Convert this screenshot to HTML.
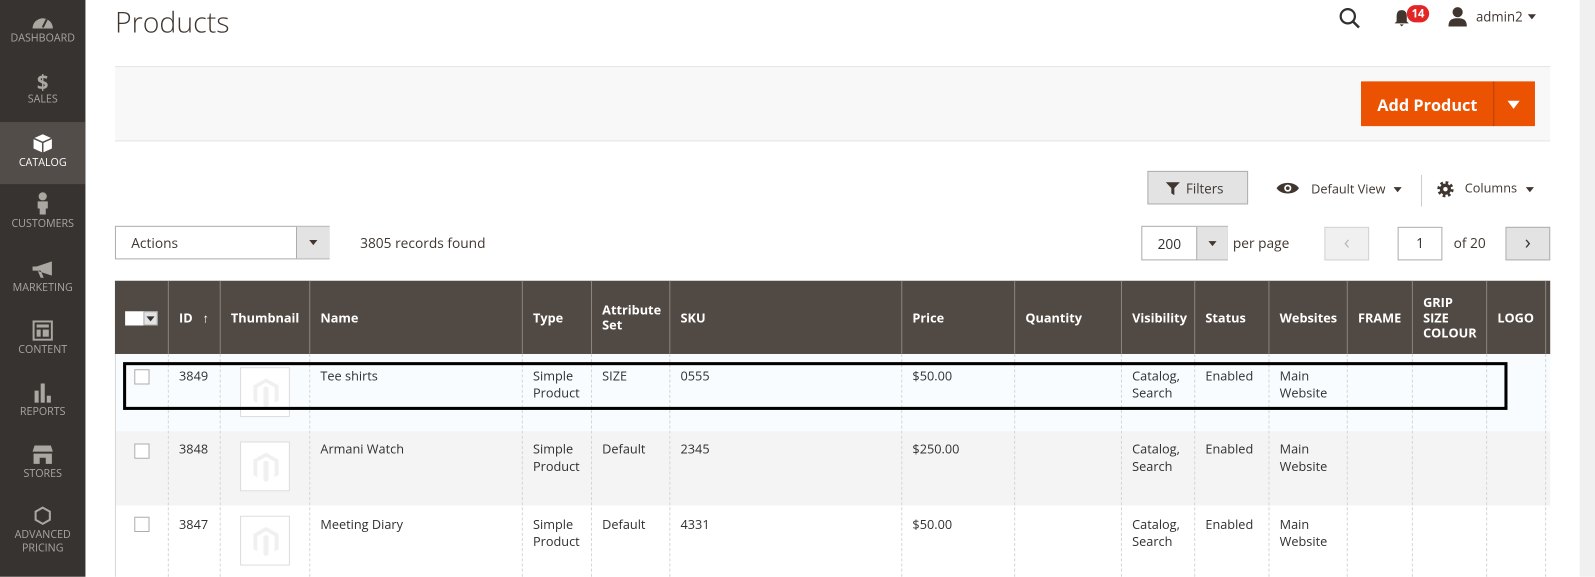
<!DOCTYPE html>
<html><head><meta charset="utf-8"><style>
*{margin:0;padding:0;box-sizing:border-box}
html,body{width:1595px;height:567px;overflow:hidden;background:#fff}
#w{position:absolute;left:0;top:0;width:1568px;height:558px;transform:scale(1.0172);transform-origin:0 0;font-family:"Open Sans","Liberation Sans",sans-serif;color:#303030;font-size:13px}
.a{position:absolute}
.sb{left:0;top:0;width:84px;height:567px;background:#373330}
.ni{position:absolute;left:0;width:84px;text-align:center;color:#aaa6a0;font-size:10.5px;line-height:13px}
.ni svg{display:block;margin:0 auto 3px}
.th{position:absolute;top:276px;height:72px;color:#fff;font-weight:bold;font-size:12.5px;display:flex;align-items:center;padding-left:10px;line-height:15px;border-left:1px solid #8a837f}
.vl{position:absolute;top:348px;height:219px;border-left:1px dashed #d6d6d6}
.c{position:absolute;font-size:12.5px;line-height:17px;color:#303030}
.cb{position:absolute;width:15px;height:15px;border:1px solid #adadad;background:#fff;left:132px}
.tn{position:absolute;left:236px;width:49px;height:49px;border:1px solid #ddd;background:#fff}
.tn svg{position:absolute;left:12px;top:10px}
</style></head><body><div id="w">
<div class="a sb"></div>
<div class="a" style="left:0;top:120px;width:84px;height:61px;background:#524d49"></div>
<div class="ni" style="top:13px"><svg width="22" height="16" viewBox="0 0 22 16"><path d="M1 15A10 10 0 0 1 21 15Z" fill="#aaa6a0"/><path d="M11 14L15 6" stroke="#373330" stroke-width="2"/></svg>DASHBOARD</div>
<div class="ni" style="top:70px"><div style="font-size:20px;font-weight:bold;line-height:22px;color:#aaa6a0">$</div>SALES</div>
<div class="ni" style="top:131px;color:#fff"><svg width="20" height="20" viewBox="0 0 20 20"><path d="M10 1L19 5V15L10 19L1 15V5Z" fill="#fff"/><path d="M1 5L10 9L19 5M10 9V19" stroke="#524d49" stroke-width="1.5" fill="none"/></svg>CATALOG</div>
<div class="ni" style="top:189px"><svg width="14" height="22" viewBox="0 0 14 22"><circle cx="7" cy="4" r="4" fill="#aaa6a0"/><path d="M2 9H12V16H10V22H4V16H2Z" fill="#aaa6a0"/></svg>CUSTOMERS</div>
<div class="ni" style="top:256px"><svg width="22" height="18" viewBox="0 0 22 18"><path d="M1 6H5L20 1V15L5 10H1Z M6 10L9 17H12L9 10" fill="#aaa6a0"/></svg>MARKETING</div>
<div class="ni" style="top:315px"><svg width="20" height="20" viewBox="0 0 20 20"><rect x="1" y="1" width="18" height="18" fill="none" stroke="#aaa6a0" stroke-width="2"/><rect x="4" y="4" width="12" height="3" fill="#aaa6a0"/><rect x="4" y="9" width="4" height="7" fill="#aaa6a0"/><rect x="10" y="9" width="6" height="7" fill="#aaa6a0"/></svg>CONTENT</div>
<div class="ni" style="top:376px"><svg width="20" height="20" viewBox="0 0 20 20"><rect x="2" y="8" width="4" height="12" fill="#aaa6a0"/><rect x="8" y="1" width="4" height="19" fill="#aaa6a0"/><rect x="14" y="13" width="4" height="7" fill="#aaa6a0"/></svg>REPORTS</div>
<div class="ni" style="top:437px"><svg width="22" height="20" viewBox="0 0 22 20"><path d="M3 1H19L21 7H1Z M2 9H20V19H14V13H8V19H2Z" fill="#aaa6a0"/></svg>STORES</div>
<div class="ni" style="top:497px"><svg width="20" height="20" viewBox="0 0 20 20"><path d="M10 2L17 6V14L10 18L3 14V6Z" fill="none" stroke="#aaa6a0" stroke-width="2"/></svg>ADVANCED<br>PRICING</div>

<div class="a" style="left:113px;top:3px;font-size:28px;font-weight:300;color:#41362f">Products</div>
<svg class="a" style="left:1316px;top:7px" width="22" height="22" viewBox="0 0 22 22"><circle cx="9" cy="9" r="7" fill="none" stroke="#303030" stroke-width="2.2"/><path d="M14 14L20 20" stroke="#303030" stroke-width="2.5"/></svg>
<svg class="a" style="left:1370px;top:9px" width="16" height="18" viewBox="0 0 16 18"><path d="M8 1C4 1 3 4 3 7V12L1 14H15L13 12V7C13 4 12 1 8 1Z M6 15H10L8 17Z" fill="#41362f"/></svg>
<div class="a" style="left:1383px;top:5px;width:22px;height:17px;border-radius:9px;background:#e22626;color:#fff;font-size:11px;font-weight:bold;text-align:center;line-height:17px">14</div>
<svg class="a" style="left:1423px;top:6px" width="20" height="20" viewBox="0 0 20 20"><circle cx="10" cy="6" r="5" fill="#41362f"/><path d="M1 20C1 13 5 12 10 12S19 13 19 20Z" fill="#41362f"/></svg>
<div class="a" style="left:1451px;top:7px;font-size:13px;color:#41362f">admin2</div>
<div class="a" style="left:1502px;top:14px;border-left:4px solid transparent;border-right:4px solid transparent;border-top:5px solid #41362f"></div>

<div class="a" style="left:113px;top:65px;width:1411px;height:74px;background:#f8f8f8;border-top:1px solid #e3e3e3;border-bottom:1px solid #e3e3e3"></div>
<div class="a" style="left:1338px;top:80px;width:171px;height:44px;background:#eb5202;color:#fff;font-weight:bold;font-size:16px"><span style="position:absolute;left:16px;top:12px">Add Product</span><div style="position:absolute;left:130px;top:0;height:44px;border-left:1px solid #b84002"></div><div style="position:absolute;left:144px;top:19px;border-left:6px solid transparent;border-right:6px solid transparent;border-top:8px solid #fff"></div></div>
<div class="a" style="left:1553px;top:0;width:20px;height:567px;background:#f0f0f0"></div>

<div class="a" style="left:1128px;top:168px;width:99px;height:33px;background:#e3e3e3;border:1px solid #adadad;font-size:13px;color:#41362f"><svg style="position:absolute;left:17px;top:10px" width="14" height="13" viewBox="0 0 14 13"><path d="M0 0H14L8.5 6V13L5.5 11V6Z" fill="#41362f"/></svg><span style="position:absolute;left:37px;top:7px">Filters</span></div>
<svg class="a" style="left:1254px;top:178px" width="24" height="14" viewBox="0 0 24 14"><path d="M1 7C5 0 19 0 23 7C19 14 5 14 1 7Z" fill="#41362f"/><circle cx="12" cy="7" r="3.5" fill="#fff"/><circle cx="12" cy="7" r="1.8" fill="#41362f"/></svg>
<div class="a" style="left:1289px;top:177px;font-size:12.5px;color:#41362f">Default View</div>
<div class="a" style="left:1370px;top:184px;border-left:4px solid transparent;border-right:4px solid transparent;border-top:5px solid #41362f"></div>
<div class="a" style="left:1397px;top:172px;height:31px;border-left:1px solid #ccc"></div>
<svg class="a" style="left:1412px;top:177px" width="18" height="18" viewBox="0 0 18 18"><circle cx="9" cy="9" r="6" fill="none" stroke="#41362f" stroke-width="4" stroke-dasharray="2.4 2.3"/><circle cx="9" cy="9" r="5.5" fill="#41362f"/><circle cx="9" cy="9" r="2.2" fill="#fff"/></svg>
<div class="a" style="left:1440px;top:176px;font-size:12.5px;color:#41362f">Columns</div>
<div class="a" style="left:1500px;top:184px;border-left:4px solid transparent;border-right:4px solid transparent;border-top:5px solid #41362f"></div>

<div class="a" style="left:113px;top:222px;width:211px;height:33px;border:1px solid #adadad;background:#fff"><span style="position:absolute;left:15px;top:7px;font-size:13.5px;color:#41362f">Actions</span><div style="position:absolute;left:177px;top:0;width:33px;height:31px;background:#e3e3e3;border-left:1px solid #adadad"><div style="position:absolute;left:12px;top:13px;border-left:4px solid transparent;border-right:4px solid transparent;border-top:5px solid #41362f"></div></div></div>
<div class="a" style="left:354px;top:230px;font-size:13.5px;color:#41362f">3805 records found</div>
<div class="a" style="left:1122px;top:222px;width:85px;height:34px;border:1px solid #adadad;background:#fff"><span style="position:absolute;left:15px;top:8px;font-size:13.5px">200</span><div style="position:absolute;left:53px;top:0;width:31px;height:32px;background:#e3e3e3;border-left:1px solid #adadad"><div style="position:absolute;left:11px;top:14px;border-left:4px solid transparent;border-right:4px solid transparent;border-top:5px solid #41362f"></div></div></div>
<div class="a" style="left:1212px;top:230px;font-size:13.5px;color:#41362f">per page</div>
<div class="a" style="left:1302px;top:223px;width:44px;height:33px;background:#f0f0f0;border:1px solid #d1d1d1;color:#bbb;font-size:20px;text-align:center;line-height:28px">‹</div>
<div class="a" style="left:1374px;top:223px;width:44px;height:33px;border:1px solid #adadad;text-align:center;line-height:31px;font-size:13.5px">1</div>
<div class="a" style="left:1429px;top:230px;font-size:13.5px;color:#41362f">of 20</div>
<div class="a" style="left:1480px;top:223px;width:44px;height:33px;background:#e3e3e3;border:1px solid #adadad;color:#41362f;font-size:20px;text-align:center;line-height:28px">›</div>

<div class="a" style="left:113px;top:276px;width:1411px;height:72px;background:#514943"></div>
<div class="a" style="left:123px;top:306px;width:19px;height:14px;background:#fff"></div>
<div class="a" style="left:141px;top:306px;width:14px;height:14px;background:#e3e3e3;border:1px solid #adadad"><div style="position:absolute;left:2px;top:4px;border-left:4px solid transparent;border-right:4px solid transparent;border-top:5px solid #303030"></div></div>
<div class="th" style="left:165px">ID&nbsp;&nbsp;&nbsp;↑</div>
<div class="th" style="left:216px">Thumbnail</div>
<div class="th" style="left:304px">Name</div>
<div class="th" style="left:513px">Type</div>
<div class="th" style="left:581px">Attribute<br>Set</div>
<div class="th" style="left:658px">SKU</div>
<div class="th" style="left:886px">Price</div>
<div class="th" style="left:997px">Quantity</div>
<div class="th" style="left:1102px">Visibility</div>
<div class="th" style="left:1174px">Status</div>
<div class="th" style="left:1247px">Websites</div>
<div class="th" style="left:1324px">FRAME</div>
<div class="th" style="left:1388px">GRIP<br>SIZE<br>COLOUR</div>
<div class="th" style="left:1461px">LOGO</div>
<div class="th" style="left:1519px;padding:0"></div>

<div class="a" style="left:113px;top:348px;width:1411px;height:76px;background:#f8fcfe"></div>
<div class="a" style="left:113px;top:424px;width:1411px;height:73px;background:#f4f4f4"></div>
<div class="a" style="left:113px;top:348px;height:219px;border-left:1px solid #d6d6d6"></div>
<div class="vl" style="left:165px"></div><div class="vl" style="left:216px"></div><div class="vl" style="left:304px"></div><div class="vl" style="left:513px"></div><div class="vl" style="left:581px"></div><div class="vl" style="left:658px"></div><div class="vl" style="left:886px"></div><div class="vl" style="left:997px"></div><div class="vl" style="left:1102px"></div><div class="vl" style="left:1174px"></div><div class="vl" style="left:1247px"></div><div class="vl" style="left:1324px"></div><div class="vl" style="left:1388px"></div><div class="vl" style="left:1461px"></div><div class="vl" style="left:1519px"></div>

<div class="cb" style="top:363px"></div><div class="cb" style="top:436px"></div><div class="cb" style="top:508px"></div>
<div class="tn" style="top:361px"><svg width="25" height="29" viewBox="0 0 25 29"><path d="M12.5 0L25 7V22L21 24V9L12.5 4L4 9V24L0 22V7Z M10 9L12.5 8L15 9V27L12.5 29L10 27Z" fill="#f0f0f0"/></svg></div>
<div class="tn" style="top:434px"><svg width="25" height="29" viewBox="0 0 25 29"><path d="M12.5 0L25 7V22L21 24V9L12.5 4L4 9V24L0 22V7Z M10 9L12.5 8L15 9V27L12.5 29L10 27Z" fill="#f0f0f0"/></svg></div>
<div class="tn" style="top:507px"><svg width="25" height="29" viewBox="0 0 25 29"><path d="M12.5 0L25 7V22L21 24V9L12.5 4L4 9V24L0 22V7Z M10 9L12.5 8L15 9V27L12.5 29L10 27Z" fill="#f0f0f0"/></svg></div>

<div class="c" style="left:176px;top:361px">3849</div>
<div class="c" style="left:315px;top:361px">Tee shirts</div>
<div class="c" style="left:524px;top:361px">Simple<br>Product</div>
<div class="c" style="left:592px;top:361px">SIZE</div>
<div class="c" style="left:669px;top:361px">0555</div>
<div class="c" style="left:897px;top:361px">$50.00</div>
<div class="c" style="left:1113px;top:361px">Catalog,<br>Search</div>
<div class="c" style="left:1185px;top:361px">Enabled</div>
<div class="c" style="left:1258px;top:361px">Main<br>Website</div>

<div class="c" style="left:176px;top:433px">3848</div>
<div class="c" style="left:315px;top:433px">Armani Watch</div>
<div class="c" style="left:524px;top:433px">Simple<br>Product</div>
<div class="c" style="left:592px;top:433px">Default</div>
<div class="c" style="left:669px;top:433px">2345</div>
<div class="c" style="left:897px;top:433px">$250.00</div>
<div class="c" style="left:1113px;top:433px">Catalog,<br>Search</div>
<div class="c" style="left:1185px;top:433px">Enabled</div>
<div class="c" style="left:1258px;top:433px">Main<br>Website</div>

<div class="c" style="left:176px;top:507px">3847</div>
<div class="c" style="left:315px;top:507px">Meeting Diary</div>
<div class="c" style="left:524px;top:507px">Simple<br>Product</div>
<div class="c" style="left:592px;top:507px">Default</div>
<div class="c" style="left:669px;top:507px">4331</div>
<div class="c" style="left:897px;top:507px">$50.00</div>
<div class="c" style="left:1113px;top:507px">Catalog,<br>Search</div>
<div class="c" style="left:1185px;top:507px">Enabled</div>
<div class="c" style="left:1258px;top:507px">Main<br>Website</div>

<div class="a" style="left:121px;top:356px;width:1361px;height:47px;border:3px solid #000"></div>
</div></body></html>
